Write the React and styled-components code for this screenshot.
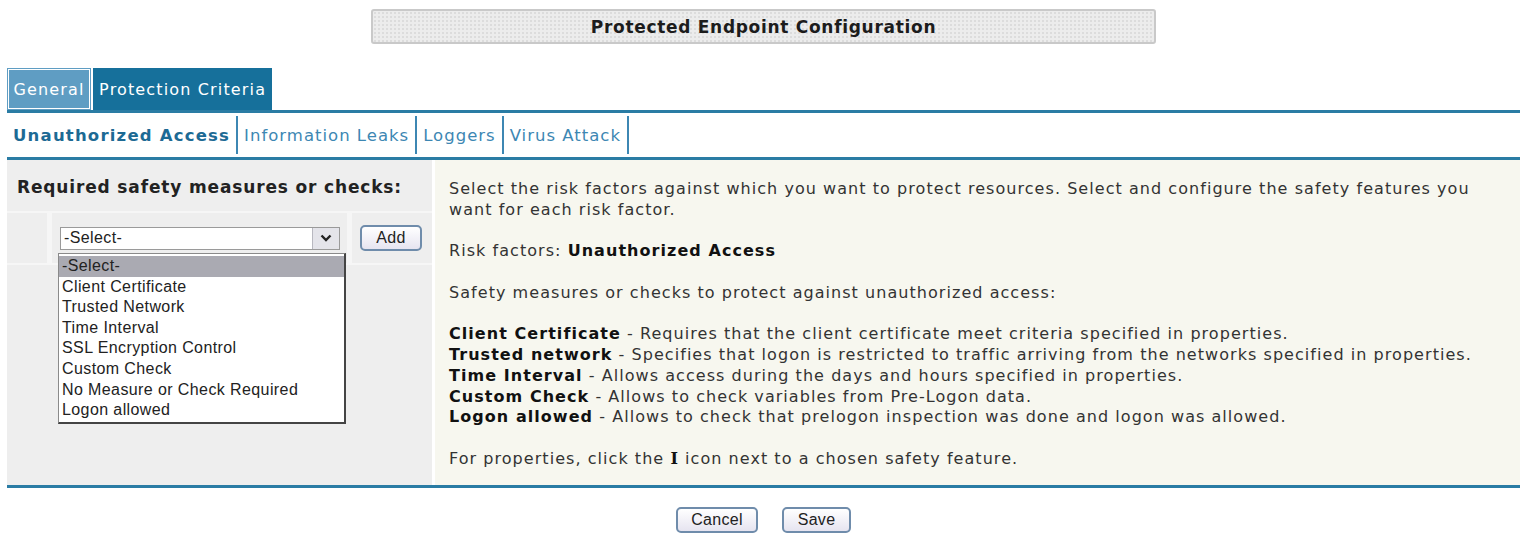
import React from 'react'
import styled, { createGlobalStyle } from 'styled-components'

const GlobalStyle = createGlobalStyle`
  body {
    margin: 0;
    background: #fff;
    font-family: 'DejaVu Sans', Verdana, sans-serif;
  }
`

const Page = styled.div`
  width: 1513px;
  padding: 9px 11px 0 7px;
`

const TitleRow = styled.div`
  display: flex;
  justify-content: center;
`

const TitleBox = styled.h1`
  width: 781px;
  height: 31px;
  margin: 0;
  display: flex;
  align-items: center;
  justify-content: center;
  border: 2px solid #c9c9c9;
  border-radius: 3px;
  background-color: #ececec;
  background-image: radial-gradient(#dcdcdc 0.8px, transparent 0.9px);
  background-size: 4px 4px;
  font-size: 17px;
  letter-spacing: 0.7px;
  font-weight: bold;
  color: #1c1c1c;
`

const TabBar = styled.div`
  display: flex;
  gap: 2px;
  margin-top: 24px;
  border-bottom: 3px solid #2a7ca4;
`

const Tab = styled.div`
  height: 42px;
  display: flex;
  align-items: center;
  padding: 0 6px 0 6.5px;
  font-size: 16px;
  letter-spacing: 1.15px;
  color: #fff;
  box-sizing: border-box;
  background: ${(props) => (props.active ? '#16709b' : '#5f9dc3')};
  outline: ${(props) => (props.active ? 'none' : '1px solid #fff')};
  outline-offset: -2px;
`

const SubTabBar = styled.div`
  display: flex;
  align-items: center;
  height: 44px;
  border-bottom: 3px solid #2a7ca4;
`

const SubTab = styled.div`
  height: 38px;
  display: flex;
  align-items: center;
  padding: 0 6px;
  font-size: 16.5px;
  letter-spacing: ${(props) => (props.active ? 1.2 : 1.0)}px;
  font-weight: ${(props) => (props.active ? 'bold' : 'normal')};
  color: ${(props) => (props.active ? '#1d6a94' : '#3d87b3')};
  border-right: 2px solid #3d87b3;
`

const Content = styled.div`
  display: grid;
  grid-template-columns: 425px 1fr;
  grid-template-rows: 325px;
  gap: 3px;
  border-bottom: 3px solid #2a7ca4;
`

const LeftPanel = styled.div`
  display: flex;
  flex-direction: column;
  gap: 2px;
  background: #f6f6f6;
`

const Cell = styled.div`
  background: #eeeeee;
`

const FillerCell = styled(Cell)`
  flex: 1;
`

const HeadingCell = styled(Cell)`
  height: 51px;
  padding: 17px 0 0 10px;
  box-sizing: border-box;
  font-size: 17px;
  letter-spacing: 0.85px;
  font-weight: bold;
  color: #222;
`

const ControlRow = styled.div`
  display: grid;
  grid-template-columns: 40px 295px 1fr;
  gap: 5px;
  height: 50px;
`

const SelectCell = styled(Cell)`
  position: relative;
  display: flex;
  align-items: center;
  padding-left: 8px;
`

const ButtonCell = styled(Cell)`
  display: flex;
  align-items: center;
  padding-left: 8px;
`

const SelectBox = styled.div`
  width: 280px;
  height: 23px;
  box-sizing: border-box;
  display: flex;
  border: 1px solid #9a9a9a;
  background: #fff;
  font-family: 'Liberation Sans', Arial, sans-serif;
  font-size: 16px;
  color: #222;
`

const SelectValue = styled.div`
  flex: 1;
  padding: 1px 0 0 3px;
  letter-spacing: 0.4px;
`

const SelectArrow = styled.div`
  width: 26px;
  display: flex;
  align-items: center;
  justify-content: center;
  background: #e4e4ea;
  border-left: 1px solid #b8b8c0;
`

const OptionList = styled.ul`
  position: absolute;
  left: 6px;
  top: 40px;
  width: 288px;
  margin: 0;
  padding: 2px 0 1px;
  list-style: none;
  box-sizing: border-box;
  background: #fff;
  border: 1px solid #8a8a8a;
  border-right: 2px solid #444;
  border-bottom: 2px solid #444;
  font-family: 'Liberation Sans', Arial, sans-serif;
  font-size: 16px;
  color: #222;
  z-index: 2;
`

const Option = styled.li`
  height: 20.6px;
  line-height: 20px;
  padding-left: 3px;
  letter-spacing: 0.4px;
  background: ${(props) => (props.selected ? '#aaaab2' : 'transparent')};
`

const Button = styled.button`
  width: ${(props) => props.w}px;
  height: 26px;
  padding: 0;
  border: 2px solid #6f8cab;
  border-radius: 5px;
  background: linear-gradient(#ffffff, #e6e4f0);
  font-family: 'Liberation Sans', Arial, sans-serif;
  font-size: 16px;
  color: #222;
  letter-spacing: 0.3px;
  cursor: pointer;
`

const RightPanel = styled.div`
  overflow: hidden;
  background: #f7f7ef;
  padding: 19px 20px 0 14px;
  font-size: 16px;
  letter-spacing: 1.05px;
  line-height: 20.75px;
  color: #333;
`

const Para = styled.p`
  margin: 0 0 20.75px;

  &:last-child {
    margin-bottom: 0;
  }
`

const Term = styled.b`
  color: #111;
`

const IconLetter = styled.b`
  font-family: 'DejaVu Serif', serif;
  color: #111;
`

const Footer = styled.div`
  display: flex;
  justify-content: center;
  gap: 24px;
  padding-top: 19px;
`

const options = [
  '-Select-',
  'Client Certificate',
  'Trusted Network',
  'Time Interval',
  'SSL Encryption Control',
  'Custom Check',
  'No Measure or Check Required',
  'Logon allowed',
]

const checks = [
  ['Client Certificate', 'Requires that the client certificate meet criteria specified in properties.'],
  ['Trusted network', 'Specifies that logon is restricted to traffic arriving from the networks specified in properties.'],
  ['Time Interval', 'Allows access during the days and hours specified in properties.'],
  ['Custom Check', 'Allows to check variables from Pre-Logon data.'],
  ['Logon allowed', 'Allows to check that prelogon inspection was done and logon was allowed.'],
]

const App = () => {
  return (
    <>
      <GlobalStyle />
      <Page>
        <TitleRow>
          <TitleBox>Protected Endpoint Configuration</TitleBox>
        </TitleRow>

        <TabBar>
          <Tab>General</Tab>
          <Tab active>Protection Criteria</Tab>
        </TabBar>

        <SubTabBar>
          <SubTab active>Unauthorized Access</SubTab>
          <SubTab>Information Leaks</SubTab>
          <SubTab>Loggers</SubTab>
          <SubTab>Virus Attack</SubTab>
        </SubTabBar>

        <Content>
          <LeftPanel>
            <HeadingCell>Required safety measures or checks:</HeadingCell>
            <ControlRow>
              <Cell />
              <SelectCell>
                <SelectBox>
                  <SelectValue>-Select-</SelectValue>
                  <SelectArrow>
                    <svg width="12" height="8" viewBox="0 0 12 8">
                      <path d="M1.5 1.5 L6 6 L10.5 1.5" fill="none" stroke="#222" strokeWidth="2.4" />
                    </svg>
                  </SelectArrow>
                </SelectBox>
                <OptionList>
                  {options.map((o, i) => (
                    <Option key={o} selected={i === 0}>
                      {o}
                    </Option>
                  ))}
                </OptionList>
              </SelectCell>
              <ButtonCell>
                <Button w={62}>Add</Button>
              </ButtonCell>
            </ControlRow>
            <FillerCell />
          </LeftPanel>

          <RightPanel>
            <Para>
              Select the risk factors against which you want to protect resources. Select and configure the safety
              features you want for each risk factor.
            </Para>
            <Para>
              Risk factors: <Term>Unauthorized Access</Term>
            </Para>
            <Para>Safety measures or checks to protect against unauthorized access:</Para>
            <Para>
              {checks.map(([name, text]) => (
                <div key={name}>
                  <Term>{name}</Term> - {text}
                </div>
              ))}
            </Para>
            <Para>
              For properties, click the <IconLetter>I</IconLetter> icon next to a chosen safety feature.
            </Para>
          </RightPanel>
        </Content>

        <Footer>
          <Button w={82}>Cancel</Button>
          <Button w={69}>Save</Button>
        </Footer>
      </Page>
    </>
  )
}

export default App
